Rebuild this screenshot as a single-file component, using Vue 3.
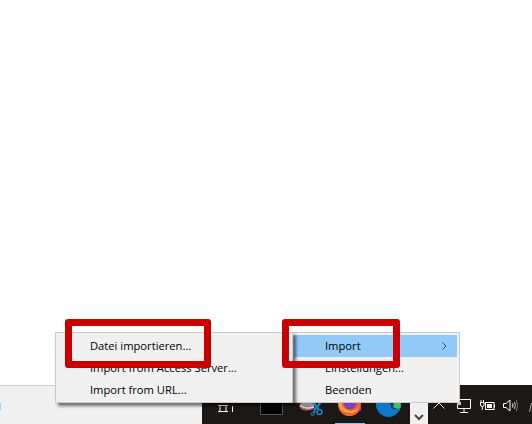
<script setup>
const leftItems = ["Datei importieren...", "Import from Access Server...", "Import from URL..."];
const rightItems = ["Import", "Einstellungen...", "Beenden"];
</script>

<template>
  <div class="screen">
    <div class="blank"></div>
    <div class="taskbar">
      <div class="light">
        <span class="app-sliver"></span>
      </div>
      <div class="dark">
        <div class="apps">
          <svg class="icon-view" width="15" height="8" viewBox="0 0 15 8">
            <path d="M0 .5H10M0 6.500H10M2 .5V6.500M8 .5V6.500M14.500 1V7" stroke="#fff" fill="none" />
          </svg>
          <span class="black-app"></span>
          <svg class="icon-snip" width="24" height="14" viewBox="0 0 24 14">
            <ellipse cx="8" cy="4" rx="7.500" ry="4.500" fill="#8d8686" />
            <path d="M1 3.500Q7 8 15 5" stroke="#d8d8d8" stroke-width="1.500" fill="none" />
            <path d="M1 5Q7 9 15 6.500" stroke="#c9403c" fill="none" />
            <path d="M22 0L16 7L15 11M15 1L20 8" stroke="#1488cc" stroke-width="2" fill="none" />
            <circle cx="13.500" cy="12" r="1.500" stroke="#1488cc" fill="none" />
            <circle cx="20.500" cy="10" r="2.500" stroke="#1488cc" stroke-width="1.500" fill="none" />
          </svg>
          <svg class="icon-fox" width="23" height="23" viewBox="0 0 23 23">
            <circle cx="11.500" cy="11.500" r="11.500" fill="#f2603c" />
            <circle cx="12" cy="10" r="6.500" fill="#7b3fc0" />
            <path d="M0 9Q2 21 14 20Q19 19 21 15Q13 21 6 15Q3 12 3 8Z" fill="#ffa92e" />
            <path d="M16 22Q21 19 23 12L23 17Z" fill="#e0357a" />
          </svg>
          <svg class="icon-edge" width="25" height="25" viewBox="0 0 25 25">
            <circle cx="12.500" cy="12.500" r="12.500" fill="#0d78cc" />
            <path d="M7 12Q12 4 20 6Q25 9 24.500 15Q21 19 15 16Q16 12 12 10.500Q9 10.500 7 12Z" fill="#0a3d68" />
            <path d="M16 9Q21 6 24 9Q25.500 13 24.500 16Q21 18 17 15Q19 12 16 9Z" fill="#3fc262" />
          </svg>
          <span class="running"></span>
        </div>
        <div class="overflow">
          <svg width="10" height="7" viewBox="0 0 10 7">
            <path d="M1 1L5 5L9 1" stroke="#444" stroke-width="2" fill="none" />
          </svg>
        </div>
        <div class="tray">
          <svg class="tray-up" width="12" height="7" viewBox="0 0 12 7">
            <path d="M.5 6.500L6 1L11.500 6.500" stroke="#ddd" fill="none" />
          </svg>
          <svg class="tray-net" width="14" height="14" viewBox="0 0 14 14">
            <path d="M2.500 .5H13.500V9.500H.5V6M7 9.500V13.500M3 13.500H11" stroke="#fff" fill="none" />
            <rect x="0" y="3" width="4" height="3" fill="#c4c4c4" />
          </svg>
          <svg class="tray-power" width="15" height="11" viewBox="0 0 15 11">
            <path d="M1 0V2.500M3.500 0V2.500M.5 2.500H4V5Q4 6.500 2.250 6.500Q.5 6.500 .5 5ZM2.250 6.500V10" stroke="#fff" fill="none" />
            <rect x="5.500" y="2.500" width="8.500" height="7" stroke="#fff" fill="none" />
            <rect x="7" y="4" width="5" height="4" fill="#fff" />
            <rect x="14" y="4.500" width="1" height="3" fill="#fff" />
          </svg>
          <svg class="tray-sound" width="16" height="13" viewBox="0 0 16 13">
            <path d="M.5 4.500H3L7 1V12L3 8.500H.5Z" stroke="#fff" fill="none" />
            <path d="M9.500 4.500Q10.500 6.500 9.500 8.500" stroke="#fff" fill="none" />
            <path d="M11.500 3Q13 6.500 11.500 10" stroke="#ccc" fill="none" />
            <path d="M13.500 1Q15.500 6.500 13.500 12" stroke="#777" fill="none" />
          </svg>
          <svg class="tray-pen" width="3" height="9" viewBox="0 0 3 9">
            <path d="M.5 9L2.500 0" stroke="#aaa" fill="none" />
          </svg>
        </div>
      </div>
    </div>

    <ul class="menu menu-right">
      <li v-for="(item, i) in rightItems" :key="item" :class="{ active: i === 0 }">
        {{ item }}
        <svg v-if="i === 0" class="arrow" width="5" height="8" viewBox="0 0 5 8">
          <path d="M.5 .5L4 4L.5 7.500" stroke="#444" fill="none" />
        </svg>
      </li>
    </ul>
    <ul class="menu menu-left">
      <li v-for="item in leftItems" :key="item">{{ item }}</li>
    </ul>

    <div class="mark mark-left"></div>
    <div class="mark mark-right"></div>
  </div>
</template>

<style scoped>
.screen {
  position: relative;
  width: 532px;
  height: 424px;
  overflow: hidden;
  background: #fff;
  font-family: "Open Sans", "Noto Sans", sans-serif;
}
.blank {
  height: 385px;
}
.taskbar {
  display: flex;
  height: 39px;
}
.light {
  position: relative;
  flex: 0 0 202px;
  box-sizing: border-box;
  background: #f0f0f0;
  border-top: 1px solid #c8c8c8;
}
.app-sliver {
  position: absolute;
  left: 0;
  top: 17px;
  width: 1px;
  height: 7px;
  background: #7fdcff;
}
.dark {
  flex: 1;
  display: flex;
  background: #1c1815;
}
.apps {
  position: relative;
  flex: 0 0 208px;
  height: 39px;
  display: flex;
  align-items: flex-start;
  overflow: hidden;
}
.icon-view {
  margin: 20px 0 0 16px;
}
.black-app {
  flex: none;
  width: 21px;
  height: 29px;
  margin-left: 27px;
  background: #000;
  border: 1px solid #555;
  border-top: 0;
}
.icon-snip {
  margin: 17px 0 0 16px;
}
.icon-fox {
  margin: 8px 0 0 15px;
}
.icon-edge {
  margin: 7px 0 0 15px;
}
.running {
  position: absolute;
  left: 133px;
  bottom: 0;
  width: 30px;
  height: 1px;
  background: #7fc4f0;
}
.overflow {
  flex: 0 0 18px;
  height: 39px;
  box-sizing: border-box;
  padding-top: 29px;
  background: #f0f0f0;
  display: flex;
  justify-content: center;
  align-items: flex-start;
}
.tray {
  flex: 1;
  display: flex;
  align-items: flex-start;
  padding-left: 5px;
}
.tray-up {
  margin-top: 17px;
}
.tray-net {
  margin: 14px 0 0 12px;
}
.tray-power {
  margin: 15px 0 0 9px;
}
.tray-sound {
  margin: 14px 0 0 8px;
}
.tray-pen {
  margin: 18px 0 0 10px;
}
.menu {
  position: absolute;
  top: 332px;
  margin: 0;
  padding: 2px;
  list-style: none;
  height: 71px;
  box-sizing: border-box;
  background: #f0f0f0;
  border: 1px solid #c8c8c8;
  font-size: 11.2px;
  color: #000;
}
.menu li {
  position: relative;
  height: 22px;
  line-height: 22px;
}
.menu-left {
  left: 55px;
  width: 238px;
  box-shadow: 3px 3px 3px rgba(0, 0, 0, 0.55);
}
.menu-left li {
  padding-left: 32px;
}
.menu-right {
  left: 291px;
  width: 169px;
}
.menu-right li {
  padding-left: 31px;
}
.menu .active {
  background: #91c9f7;
}
.arrow {
  position: absolute;
  right: 10px;
  top: 7px;
}
.mark {
  position: absolute;
  top: 319px;
  height: 49px;
  box-sizing: border-box;
  border: 7px solid #c80000;
  border-radius: 3px;
}
.mark-left {
  left: 65px;
  width: 146px;
}
.mark-right {
  left: 282px;
  width: 118px;
}
</style>
